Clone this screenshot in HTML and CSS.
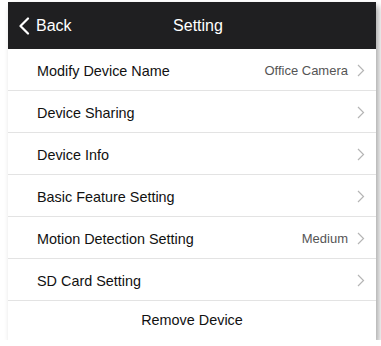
FILE: index.html
```html
<!DOCTYPE html>
<html>
<head>
<meta charset="utf-8">
<link rel="stylesheet" href="styles.css">
</head>
<body>
<div class="panel">
  <header class="topbar">
    <div class="back">
      <svg class="back-icon" width="12" height="18" viewBox="0 0 12 18"><path d="M10 1.5 L2.5 9 L10 16.5" fill="none" stroke="#fff" stroke-width="2.2" stroke-linecap="round" stroke-linejoin="round"/></svg>
      <span>Back</span>
    </div>
    <div class="title">Setting</div>
    <div class="spacer"></div>
  </header>
  <ul class="list">
    <li class="row"><span class="label">Modify Device Name</span><span class="value">Office Camera</span><svg class="chev" width="8" height="13" viewBox="0 0 8 13"><path d="M1 1 L6.5 6.5 L1 12" fill="none" stroke="#b5b5b5" stroke-width="1.2"/></svg></li>
    <li class="row"><span class="label">Device Sharing</span><span class="value"></span><svg class="chev" width="8" height="13" viewBox="0 0 8 13"><path d="M1 1 L6.5 6.5 L1 12" fill="none" stroke="#b5b5b5" stroke-width="1.2"/></svg></li>
    <li class="row"><span class="label">Device Info</span><span class="value"></span><svg class="chev" width="8" height="13" viewBox="0 0 8 13"><path d="M1 1 L6.5 6.5 L1 12" fill="none" stroke="#b5b5b5" stroke-width="1.2"/></svg></li>
    <li class="row"><span class="label">Basic Feature Setting</span><span class="value"></span><svg class="chev" width="8" height="13" viewBox="0 0 8 13"><path d="M1 1 L6.5 6.5 L1 12" fill="none" stroke="#b5b5b5" stroke-width="1.2"/></svg></li>
    <li class="row"><span class="label">Motion Detection Setting</span><span class="value">Medium</span><svg class="chev" width="8" height="13" viewBox="0 0 8 13"><path d="M1 1 L6.5 6.5 L1 12" fill="none" stroke="#b5b5b5" stroke-width="1.2"/></svg></li>
    <li class="row"><span class="label">SD Card Setting</span><span class="value"></span><svg class="chev" width="8" height="13" viewBox="0 0 8 13"><path d="M1 1 L6.5 6.5 L1 12" fill="none" stroke="#b5b5b5" stroke-width="1.2"/></svg></li>
    <li class="remove">Remove Device</li>
  </ul>
</div>
</body>
</html>
```
FILE: styles.css
```css
html, body {
  margin: 0;
  padding: 0;
  background: #ffffff;
}
body {
  font-family: "Liberation Sans", Arial, sans-serif;
  padding: 2px 0 0 8px;
}
.panel {
  width: 368px;
  background: #ffffff;
  box-shadow: 3px 4px 6px rgba(0, 0, 0, 0.32);
}
.topbar {
  height: 47px;
  background: #1f1f21;
  color: #ffffff;
  display: grid;
  grid-template-columns: 1fr auto 1fr;
  align-items: center;
}
.back {
  display: flex;
  align-items: center;
  gap: 6px;
  padding-left: 10px;
  font-size: 16px;
}
.back-icon {
  display: block;
}
.title {
  font-size: 16px;
  padding-left: 12px;
}
.list {
  list-style: none;
  margin: 0;
  padding: 0;
}
.row {
  height: 41px;
  box-sizing: border-box;
  height: 42px;
  border-bottom: 1px solid #e3e3e3;
  display: flex;
  align-items: center;
  padding: 2px 10px 0 29px;
  font-size: 14.4px;
  color: #111111;
}
.label {
  flex: 1;
}
.value {
  font-size: 13px;
  color: #555555;
  margin-right: 9px;
}
.chev {
  display: block;
  margin-right: 1px;
}
.remove {
  height: 39px;
  box-sizing: border-box;
  padding-bottom: 2px;
  display: flex;
  align-items: center;
  justify-content: center;
  font-size: 14.4px;
  color: #111111;
}
```
